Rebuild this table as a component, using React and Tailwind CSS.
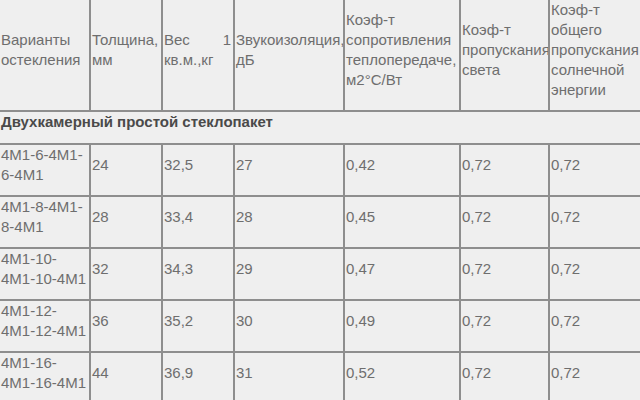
import React from "react";

const cols = "grid grid-cols-[91px_72px_72px_110px_116px_89px_1fr]";
const cell = "flex items-center border-r-2 border-[#8e8e8e] pb-[10px] pl-[1px] overflow-hidden";
const lastCell = "flex items-center pb-[10px] pl-[1px] overflow-hidden";
const dCell = "flex items-center border-r-2 border-[#8e8e8e] pb-[14px] pl-[1px]";
const dLast = "flex items-center pb-[14px] pl-[1px]";

function Lines({ lines }) {
  return (
    <div className="flex flex-col w-full">
      {lines.map((l, i) => (
        <div key={i} className="whitespace-nowrap">{l}</div>
      ))}
    </div>
  );
}

const rows = [
  ["4М1-6-4М1-", "6-4М1", "24", "32,5", "27", "0,42", "0,72", "0,72"],
  ["4М1-8-4М1-", "8-4М1", "28", "33,4", "28", "0,45", "0,72", "0,72"],
  ["4М1-10-", "4М1-10-4М1", "32", "34,3", "29", "0,47", "0,72", "0,72"],
  ["4М1-12-", "4М1-12-4М1", "36", "35,2", "30", "0,49", "0,72", "0,72"],
  ["4М1-16-", "4М1-16-4М1", "44", "36,9", "31", "0,52", "0,72", "0,72"],
];

export default function App() {
  return (
    <div
      className="w-[640px] h-[400px] overflow-hidden bg-[#efefef] text-[#6e6e6e] text-[15px] leading-[20px]"
      style={{ fontFamily: '"Liberation Sans", Arial, sans-serif' }}
    >
      {/* header */}
      <div className={`${cols} h-[112px] border-b-2 border-[#8e8e8e]`}>
        <div className={cell}><Lines lines={["Варианты", "остекления"]} /></div>
        <div className={cell}><Lines lines={["Толщина,", "мм"]} /></div>
        <div className={cell}>
          <div className="flex flex-col w-full">
            <div className="flex justify-between pr-[2px]"><span>Вес</span><span>1</span></div>
            <div className="whitespace-nowrap">кв.м.,кг</div>
          </div>
        </div>
        <div className={cell}><Lines lines={["Звукоизоляция,", "дБ"]} /></div>
        <div className={cell}><Lines lines={["Коэф-т", "сопротивления", "теплопередаче,", "м2°С/Вт"]} /></div>
        <div className={cell}><Lines lines={["Коэф-т", "пропускания", "света"]} /></div>
        <div className={lastCell}><Lines lines={["Коэф-т", "общего", "пропускания", "солнечной", "энергии"]} /></div>
      </div>
      {/* section */}
      <div className="h-[33px] border-b-2 border-[#8e8e8e] pb-[11px] pl-[1px] font-bold text-[#4a4a4a] whitespace-nowrap">
        Двухкамерный простой стеклопакет
      </div>
      {rows.map((r, i) => (
        <div key={i} className={`${cols} h-[52px] border-b-2 border-[#8e8e8e]`}>
          <div className={dCell}><Lines lines={[r[0], r[1]]} /></div>
          <div className={dCell}>{r[2]}</div>
          <div className={dCell}>{r[3]}</div>
          <div className={dCell}>{r[4]}</div>
          <div className={dCell}>{r[5]}</div>
          <div className={dCell}>{r[6]}</div>
          <div className={dLast}>{r[7]}</div>
        </div>
      ))}
    </div>
  );
}
